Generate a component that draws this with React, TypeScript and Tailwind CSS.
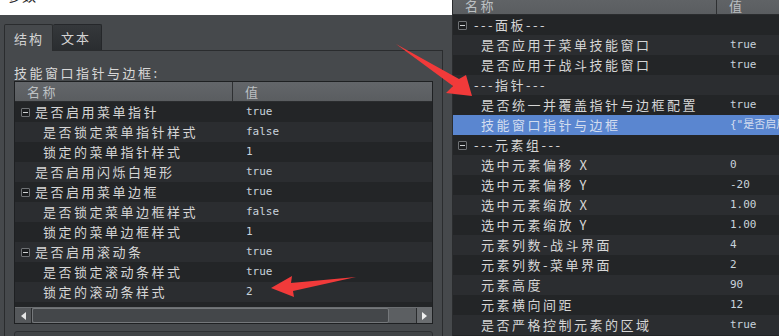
import React from 'react'

type Row = { name: string; value?: string; kind: 'group' | 'top' | 'child'; selected?: boolean }

const leftRows: Row[] = [
  { name: '是否启用菜单指针', value: 'true', kind: 'group' },
  { name: '是否锁定菜单指针样式', value: 'false', kind: 'child' },
  { name: '锁定的菜单指针样式', value: '1', kind: 'child' },
  { name: '是否启用闪烁白矩形', value: 'true', kind: 'top' },
  { name: '是否启用菜单边框', value: 'true', kind: 'group' },
  { name: '是否锁定菜单边框样式', value: 'false', kind: 'child' },
  { name: '锁定的菜单边框样式', value: '1', kind: 'child' },
  { name: '是否启用滚动条', value: 'true', kind: 'group' },
  { name: '是否锁定滚动条样式', value: 'true', kind: 'child' },
  { name: '锁定的滚动条样式', value: '2', kind: 'child' },
]

const rightRows: Row[] = [
  { name: '---面板---', kind: 'group' },
  { name: '是否应用于菜单技能窗口', value: 'true', kind: 'child' },
  { name: '是否应用于战斗技能窗口', value: 'true', kind: 'child' },
  { name: '---指针---', kind: 'group' },
  { name: '是否统一并覆盖指针与边框配置', value: 'true', kind: 'child' },
  { name: '技能窗口指针与边框', value: '{"是否启用菜单指针":true}', kind: 'child', selected: true },
  { name: '---元素组---', kind: 'group' },
  { name: '选中元素偏移 X', value: '0', kind: 'child' },
  { name: '选中元素偏移 Y', value: '-20', kind: 'child' },
  { name: '选中元素缩放 X', value: '1.00', kind: 'child' },
  { name: '选中元素缩放 Y', value: '1.00', kind: 'child' },
  { name: '元素列数-战斗界面', value: '4', kind: 'child' },
  { name: '元素列数-菜单界面', value: '2', kind: 'child' },
  { name: '元素高度', value: '90', kind: 'child' },
  { name: '元素横向间距', value: '12', kind: 'child' },
  { name: '是否严格控制元素的区域', value: 'true', kind: 'child' },
]

const cjk = "font-['Noto_Sans_CJK_SC',sans-serif]"
const mono = "font-['DejaVu_Sans_Mono','Noto_Sans_CJK_SC',monospace]"

const Collapse = () => (
  <span className="w-[9px] h-[9px] shrink-0 border border-[#6f7275] bg-[#1b1d1f] rounded-[1px] flex items-center justify-center">
    <span className="w-[5px] h-px bg-[#cfd2d4]" />
  </span>
)

const PropRow: React.FC<{ row: Row; idx: number; nameW: string; iconPad: string; iconGap: string }> = ({ row, idx, nameW, iconPad, iconGap }) => (
  <div
    className={`flex h-[20px] items-center whitespace-nowrap ${row.selected ? 'bg-[#5a86d0] text-[#d3ddef]' : idx % 2 === 0 ? 'bg-[#232527] text-[#d6d6d6]' : 'bg-[#2b2d30] text-[#d6d6d6]'}`}
  >
    <div className={`${nameW} shrink-0 flex items-center overflow-hidden ${row.kind === 'child' ? 'pl-[28px]' : iconPad}`}>
      {row.kind === 'group' && <Collapse />}
      {row.kind === 'top' && <span className="w-[9px] shrink-0" />}
      <span className={`${cjk} text-[13px] tracking-[2.5px] leading-[20px] ${row.kind !== 'child' ? iconGap : ''}`}>{row.name}</span>
    </div>
    <div className={`pl-[12px] ${mono} text-[11px] leading-[20px] ${row.selected ? 'text-[#d3ddef]' : 'text-[#c9d3dc]'}`}>{row.value}</div>
  </div>
)

export default function App() {
  return (
    <div className="relative flex w-[779px] h-[336px] overflow-hidden bg-[#46494c]">
      {/* left dialog */}
      <div className="w-[452px] shrink-0 flex flex-col bg-[#46494c]">
        <div className="h-[15px] shrink-0 bg-white flex justify-between overflow-hidden px-[7px]">
          <span className={`${cjk} text-[14px] leading-[14px] -mt-[12px] text-[#222] tracking-[1px]`}>参数</span>
          <span className="font-['DejaVu_Sans',sans-serif] text-[14px] leading-[14px] -mt-[12px] mr-[13px] text-[#333]">✕</span>
        </div>
        <div className="flex-1 flex flex-col pt-[9px] pl-[4px] pr-[9px] min-h-0">
          <div className="flex items-end h-[26px] shrink-0">
            <div className={`relative z-10 -mb-px h-[27px] w-[49px] bg-[#46494c] border border-b-0 border-[#2a2c2e] rounded-t-[2px] pl-[9px] pt-[4px] ${cjk} text-[13px] tracking-[2px] text-[#d4d4d4]`}>
              结构
            </div>
            <div className={`h-[26px] w-[49px] bg-gradient-to-b from-[#35383b] to-[#2a2d30] border border-l-0 border-b-0 border-[#25272a] rounded-t-[2px] pl-[8px] pt-[3px] ${cjk} text-[13px] tracking-[2px] text-[#d4d4d4]`}>
              文本
            </div>
          </div>
          <div className="flex-1 border border-b-0 border-[#2a2c2e] px-[9px] pt-[13px] min-h-0">
            <div className={`${cjk} text-[13px] tracking-[2.5px] leading-[17px] text-[#d8d8d8] whitespace-nowrap`}>技能窗口指针与边框:</div>
            <div className="border border-[#1e2022] bg-[#232527]">
              <div className="flex h-[20px] bg-gradient-to-b from-[#63666a] to-[#5a5d60] border-b border-[#2a2c2e] text-[#bcc0c3]">
                <div className={`w-[218px] border-r border-[#2e3032] pl-[12px] ${cjk} text-[13px] tracking-[2.5px] leading-[19px]`}>名称</div>
                <div className={`pl-[12px] ${cjk} text-[13px] leading-[19px]`}>值</div>
              </div>
              {leftRows.map((r, i) => (
                <PropRow key={i} row={r} idx={i} nameW="w-[219px]" iconPad="pl-[6px]" iconGap="ml-[5px]" />
              ))}
              <div className="h-[5px]" />
              <div className="flex h-[16px] border-t border-[#6b6e71] bg-[#3e4144]">
                <div className="w-[17px] bg-[#55585b] border-r border-[#2a2c2e] flex items-center justify-center">
                  <span className="w-0 h-0 border-y-[4px] border-y-transparent border-r-[5px] border-r-[#e6e6e6]" />
                </div>
                <div className="flex-1 flex bg-[#5c5f62]">
                  <div className="w-[357px] bg-[#44474a] border border-[#75787b] rounded-[2px]" />
                </div>
                <div className="w-[16px] bg-[#6a6d70] border-l border-[#2a2c2e] flex items-center justify-center">
                  <span className="w-0 h-0 border-y-[4px] border-y-transparent border-l-[5px] border-l-[#f0f0f0]" />
                </div>
              </div>
            </div>
            <div className="mt-[7px] h-[20px] border border-[#2e3033] rounded-t-[3px] bg-[#414447]" />
          </div>
        </div>
      </div>

      {/* right property grid */}
      <div className="flex-1 flex flex-col border-l border-[#2a2c2e] bg-[#232527] min-w-0">
        <div className="flex h-[15px] shrink-0 bg-gradient-to-b from-[#606366] to-[#5a5d60] border-b border-[#2a2c2e] text-[#bcc0c3] overflow-hidden">
          <div className={`w-[264px] shrink-0 border-r border-[#2e3032] pl-[12px] ${cjk} text-[13px] tracking-[2.5px] leading-[14px] -mt-px`}>名称</div>
          <div className={`pl-[12px] ${cjk} text-[13px] leading-[14px] -mt-px`}>值</div>
        </div>
        {rightRows.map((r, i) => (
          <PropRow key={i} row={r} idx={i} nameW="w-[265px]" iconPad="pl-[5px]" iconGap="ml-[7px]" />
        ))}
      </div>

      {/* annotation arrows */}
      <svg className="absolute inset-0 pointer-events-none" width="779" height="336" viewBox="0 0 779 336">
        <polygon points="396,44 459,79 466,75 472,96 446,93 453,86" fill="#f13a3a" />
        <polygon points="271,288 292,276 291,283 356,277 293,291 294,297" fill="#f13a3a" />
      </svg>
    </div>
  )
}
